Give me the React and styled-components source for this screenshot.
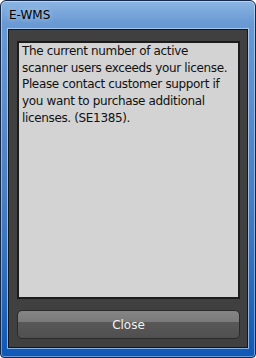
import React from 'react'
import styled, { createGlobalStyle } from 'styled-components'

const Global = createGlobalStyle`
  html, body { margin: 0; padding: 0; background: #fff; }
  body { font-family: "DejaVu Sans", sans-serif; }
`

const Window = styled.div`
  box-sizing: border-box;
  width: 256px;
  height: 358px;
  display: flex;
  flex-direction: column;
  padding: 0 7px 9px 7px;
  border: 1px solid #14294a;
  border-radius: 6px 6px 4px 4px;
  background: linear-gradient(180deg, #8bb5e3 0%, #6a9ad4 6%, #5b8ccc 30%, #3f78c0 65%, #1f63b8 88%, #0f58b6 100%);
  box-shadow: inset 0 0 0 1px rgba(255, 255, 255, 0.4);
`

const TitleBar = styled.div`
  height: 27px;
  display: flex;
  align-items: center;
  padding-left: 1px;
  padding-bottom: 1px;
  font-size: 12px;
  color: #000;
  text-shadow: 0 0 6px rgba(255, 255, 255, 0.6);
`

const Client = styled.div`
  flex: 1;
  display: flex;
  flex-direction: column;
  background: #404040;
  border: 1px solid #151515;
  box-shadow: 0 0 0 1px rgba(200, 225, 255, 0.65);
  padding: 11px 7px 8px 8px;
`

const MessageBox = styled.div`
  flex: 1;
  background: #d3d3d3;
  border: 2px solid #1c1c1c;
  padding: 0 4px 0 3px;
  font-size: 12px;
  letter-spacing: -0.35px;
  line-height: 16.67px;
  color: #111;
`

const CloseButton = styled.button`
  margin-top: 11px;
  height: 29px;
  border-radius: 5px;
  border: 1px solid #2a2a2a;
  background: linear-gradient(180deg, #858585 0%, #7a7a7a 40%, #585858 42%, #505050 100%);
  color: #f2f2f2;
  font-family: "DejaVu Sans", sans-serif;
  font-size: 12px;
  padding: 0;
`

const App = () => (
  <>
    <Global />
    <Window>
      <TitleBar>E-WMS</TitleBar>
      <Client>
        <MessageBox>
          The current number of active scanner users exceeds your license. Please contact customer support if you want to purchase additional licenses. (SE1385).
        </MessageBox>
        <CloseButton>Close</CloseButton>
      </Client>
    </Window>
  </>
)

export default App
